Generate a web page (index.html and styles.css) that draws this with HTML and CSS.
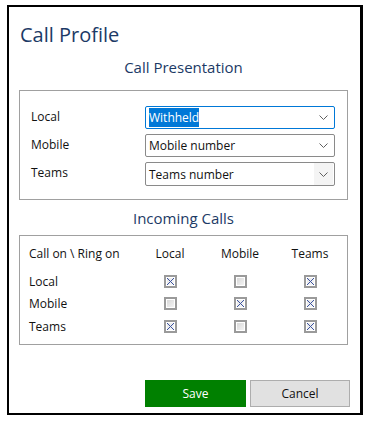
FILE: index.html
```html
<!DOCTYPE html>
<html lang="en">
<head>
    <meta charset="UTF-8">
    <title>Call Profile</title>
    <link rel="stylesheet" href="styles.css">
</head>
<body>
    <div class="window">
        <h1 class="title">Call Profile</h1>

        <h2 class="section-title">Call Presentation</h2>
        <div class="group presentation">
            <div class="field">
                <span class="label">Local</span>
                <div class="combo focused">
                    <span class="value"><span class="selected">Withheld</span></span>
                    <span class="arrow"><svg width="9" height="5" viewBox="0 0 9 5"><polyline points="0.5,0.5 4.5,4.5 8.5,0.5" fill="none" stroke="#606060" stroke-width="1"/></svg></span>
                </div>
            </div>
            <div class="field">
                <span class="label">Mobile</span>
                <div class="combo">
                    <span class="value">Mobile number</span>
                    <span class="arrow"><svg width="9" height="5" viewBox="0 0 9 5"><polyline points="0.5,0.5 4.5,4.5 8.5,0.5" fill="none" stroke="#606060" stroke-width="1"/></svg></span>
                </div>
            </div>
            <div class="field">
                <span class="label">Teams</span>
                <div class="combo">
                    <span class="value">Teams number</span>
                    <span class="arrow hover"><svg width="9" height="5" viewBox="0 0 9 5"><polyline points="0.5,0.5 4.5,4.5 8.5,0.5" fill="none" stroke="#606060" stroke-width="1"/></svg></span>
                </div>
            </div>
        </div>

        <h2 class="section-title incoming">Incoming Calls</h2>
        <div class="group matrix">
            <div class="cell head first">Call on \ Ring on</div>
            <div class="cell head">Local</div>
            <div class="cell head">Mobile</div>
            <div class="cell head">Teams</div>

            <div class="cell first">Local</div>
            <div class="cell"><span class="check on"></span></div>
            <div class="cell"><span class="check"></span></div>
            <div class="cell"><span class="check on"></span></div>

            <div class="cell first">Mobile</div>
            <div class="cell"><span class="check"></span></div>
            <div class="cell"><span class="check on"></span></div>
            <div class="cell"><span class="check on"></span></div>

            <div class="cell first">Teams</div>
            <div class="cell"><span class="check on"></span></div>
            <div class="cell"><span class="check"></span></div>
            <div class="cell"><span class="check on"></span></div>
        </div>

        <div class="actions">
            <button class="btn save">Save</button>
            <button class="btn cancel">Cancel</button>
        </div>
    </div>
</body>
</html>
```

FILE: styles.css
```css
* {
    box-sizing: border-box;
}
body {
    margin: 0;
    background: #fff;
    font-family: "Open Sans", "Noto Sans", sans-serif;
    color: #111;
}
.window {
    margin: 5px 0 0 7px;
    width: 356px;
    height: 410px;
    border: 2px solid #000;
    border-right-width: 3px;
    padding: 0 12px 0 10px;
    display: flex;
    flex-direction: column;
}
.title {
    margin: 13px 0 0 1px;
    font-size: 20px;
    font-weight: 400;
    line-height: 30px;
    color: #1c3a66;
}
.section-title {
    margin: 6px 0 0;
    font-size: 15px;
    font-weight: 400;
    line-height: 22px;
    text-align: center;
    color: #1c3a66;
}
.section-title.incoming {
    margin-top: 7px;
}
.group {
    border: 1px solid #a0a0a0;
}
.presentation {
    margin-top: 12px;
    height: 110px;
    padding: 15px 12px 0 11px;
    display: flex;
    flex-direction: column;
    gap: 5px;
}
.field {
    display: flex;
    align-items: center;
    justify-content: space-between;
}
.field:last-child .combo {
    height: 24px;
}
.label {
    font-size: 12px;
    margin-top: -3px;
}
.combo {
    width: 190px;
    height: 23px;
    border: 1px solid #8a8a8a;
    border-radius: 2px;
    display: flex;
    align-items: center;
    justify-content: space-between;
    font-size: 12px;
    background: #fff;
}
.combo.focused {
    border-color: #0078d7;
}
.value {
    padding-left: 3px;
}
.selected {
    background: #0078d7;
    color: #fff;
    padding: 1px 0;
}
.arrow {
    width: 19px;
    height: 100%;
    display: flex;
    align-items: center;
    justify-content: center;
    margin-right: 1px;
}
.arrow.hover {
    background: #f4f4f4;
}
.matrix {
    margin-top: 6px;
    height: 110px;
    padding: 6px 1px 0 9px;
    display: grid;
    grid-template-columns: 106px repeat(3, 70px);
    grid-template-rows: 28px 22px 23px 22px;
}
.cell {
    display: flex;
    align-items: center;
    justify-content: center;
    font-size: 12px;
}
.cell.first {
    justify-content: flex-start;
}
.cell.head {
    height: 22px;
    align-self: start;
}
.check {
    width: 13px;
    height: 13px;
    border: 2px solid #9a9a9a;
    box-shadow: inset 0 0 0 1px #fff;
    background: linear-gradient(135deg, #d4d4d4, #f7f7f7);
    display: block;
}
.check.on {
    background:
        linear-gradient(45deg, transparent 46%, #3a52a0 46%, #3a52a0 54%, transparent 54%) center / 7px 7px no-repeat,
        linear-gradient(-45deg, transparent 46%, #3a52a0 46%, #3a52a0 54%, transparent 54%) center / 7px 7px no-repeat,
        linear-gradient(135deg, #e4e4e4, #fafafa);
}
.actions {
    margin: auto -2px 6px 0;
    display: flex;
    justify-content: flex-end;
    gap: 4px;
}
.btn {
    height: 27px;
    font-family: inherit;
    font-size: 12px;
    border-radius: 0;
    cursor: pointer;
}
.save {
    width: 101px;
    background: #008000;
    color: #fff;
    border: none;
}
.cancel {
    width: 100px;
    background: #e1e1e1;
    color: #111;
    border: 1px solid #adadad;
}
```
